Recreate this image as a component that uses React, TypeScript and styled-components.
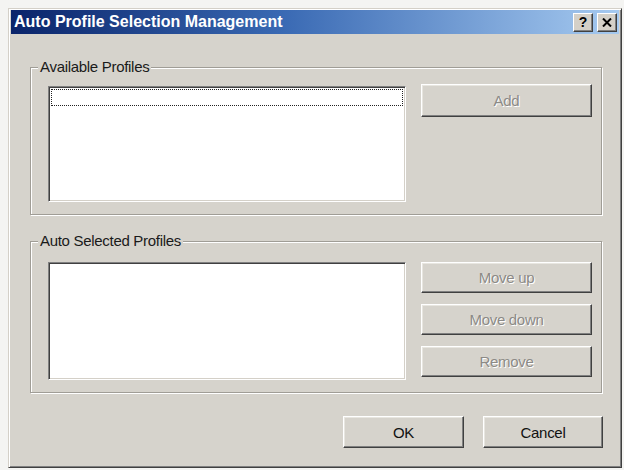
import React from 'react'
import styled, { createGlobalStyle } from 'styled-components'

const GlobalStyle = createGlobalStyle`
  html, body {
    margin: 0;
    background: #f4f4f2;
  }
  body {
    padding: 8px;
    font-family: "Liberation Sans", Arial, sans-serif;
  }
`

const StyledWindow = styled.div`
  width: 614px;
  height: 460px;
  box-sizing: border-box;
  display: flex;
  flex-direction: column;
  padding: 1px 2px 2px 2px;
  background: #d6d3cc;
  border: 1px solid;
  border-color: #d4d0c8 #404040 #404040 #d4d0c8;
  box-shadow: inset 1px 1px #fff, inset -1px -1px #808080;
`
const StyledTitleBar = styled.div`
  height: 24px;
  display: flex;
  align-items: center;
  padding: 0 2px 0 3px;
  background: linear-gradient(to right, #0a246a 0%, #3a6ab4 45%, #a6caf0 100%);
`
const StyledTitle = styled.div`
  flex: 1;
  color: #fff;
  font-weight: bold;
  font-size: 16px;
  white-space: nowrap;
`
const StyledCaptionButton = styled.div`
  width: 20px;
  height: 19px;
  box-sizing: border-box;
  margin-left: 4px;
  display: flex;
  align-items: center;
  justify-content: center;
  background: #d4d0c8;
  border: 1px solid;
  border-color: #fff #404040 #404040 #fff;
  box-shadow: inset -1px -1px #808080;
  font-weight: bold;
  font-size: 14px;
  color: #000;
`
const StyledBody = styled.div`
  flex: 1;
  display: flex;
  flex-direction: column;
  padding: 25px 17px 0 19px;
`
const StyledGroup = styled.fieldset<{ $top: number }>`
  margin: 0;
  padding: ${p => p.$top}px 9px 12px 17px;
  border: 1px solid #a09d96;
  box-shadow: inset 1px 1px #fff, 1px 1px #fff;
  min-width: 0;
  & + & {
    margin-top: 18px;
  }
`
const StyledLegend = styled.legend`
  margin-left: -10px;
  padding: 0 2px;
  font-size: 15px;
  line-height: 16px;
  color: #1a1a1a;
  letter-spacing: -0.3px;
  background: #d6d3cc;
`
const StyledRow = styled.div`
  display: flex;
  align-items: flex-start;
  gap: 15px;
`
const StyledList = styled.div<{ $height: number; $offset: number }>`
  width: 358px;
  height: ${p => p.$height}px;
  margin-top: ${p => p.$offset}px;
  box-sizing: border-box;
  padding: 2px;
  background: #fff;
  border: 1px solid;
  border-color: #808080 #fff #fff #808080;
  box-shadow: inset 1px 1px #404040, inset -1px -1px #d4d0c8;
`
const StyledFocusItem = styled.div`
  height: 17px;
  box-sizing: border-box;
  border: 1px dotted #222;
`
const StyledColumn = styled.div`
  display: flex;
  flex-direction: column;
  gap: 11px;
`
const StyledButton = styled.div<{ $width: number; $height: number; $disabled?: boolean }>`
  width: ${p => p.$width}px;
  height: ${p => p.$height}px;
  box-sizing: border-box;
  display: flex;
  align-items: center;
  justify-content: center;
  background: #d6d3cc;
  border: 1px solid;
  border-color: #fff #404040 #404040 #fff;
  box-shadow: inset -1px -1px #808080, inset 1px 1px #e8e6e0;
  font-size: 15px;
  letter-spacing: -0.3px;
  color: ${p => (p.$disabled ? '#8c8a86' : '#111')};
  text-shadow: ${p => (p.$disabled ? '1px 1px #fff' : 'none')};
`
const StyledFooter = styled.div`
  display: flex;
  justify-content: flex-end;
  gap: 19px;
  padding: 23px 0 0 0;
  margin-right: -1px;
`

function CloseGlyph() {
  return (
    <svg width="10" height="9" viewBox="0 0 10 9">
      <path d="M1 0.5 L9 8.5 M9 0.5 L1 8.5" stroke="#000" strokeWidth="2" />
    </svg>
  )
}

export default function App() {
  return (
    <>
      <GlobalStyle />
      <StyledWindow>
        <StyledTitleBar>
          <StyledTitle>Auto Profile Selection Management</StyledTitle>
          <StyledCaptionButton>?</StyledCaptionButton>
          <StyledCaptionButton><CloseGlyph /></StyledCaptionButton>
        </StyledTitleBar>
        <StyledBody>
          <StyledGroup $top={9}>
            <StyledLegend>Available Profiles</StyledLegend>
            <StyledRow>
              <StyledList $height={116} $offset={2}>
                <StyledFocusItem />
              </StyledList>
              <StyledButton $width={171} $height={33} $disabled>Add</StyledButton>
            </StyledRow>
          </StyledGroup>
          <StyledGroup $top={13}>
            <StyledLegend>Auto Selected Profiles</StyledLegend>
            <StyledRow>
              <StyledList $height={118} $offset={0} />
              <StyledColumn>
                <StyledButton $width={171} $height={31} $disabled>Move up</StyledButton>
                <StyledButton $width={171} $height={31} $disabled>Move down</StyledButton>
                <StyledButton $width={171} $height={31} $disabled>Remove</StyledButton>
              </StyledColumn>
            </StyledRow>
          </StyledGroup>
          <StyledFooter>
            <StyledButton $width={121} $height={32}>OK</StyledButton>
            <StyledButton $width={120} $height={32}>Cancel</StyledButton>
          </StyledFooter>
        </StyledBody>
      </StyledWindow>
    </>
  )
}
